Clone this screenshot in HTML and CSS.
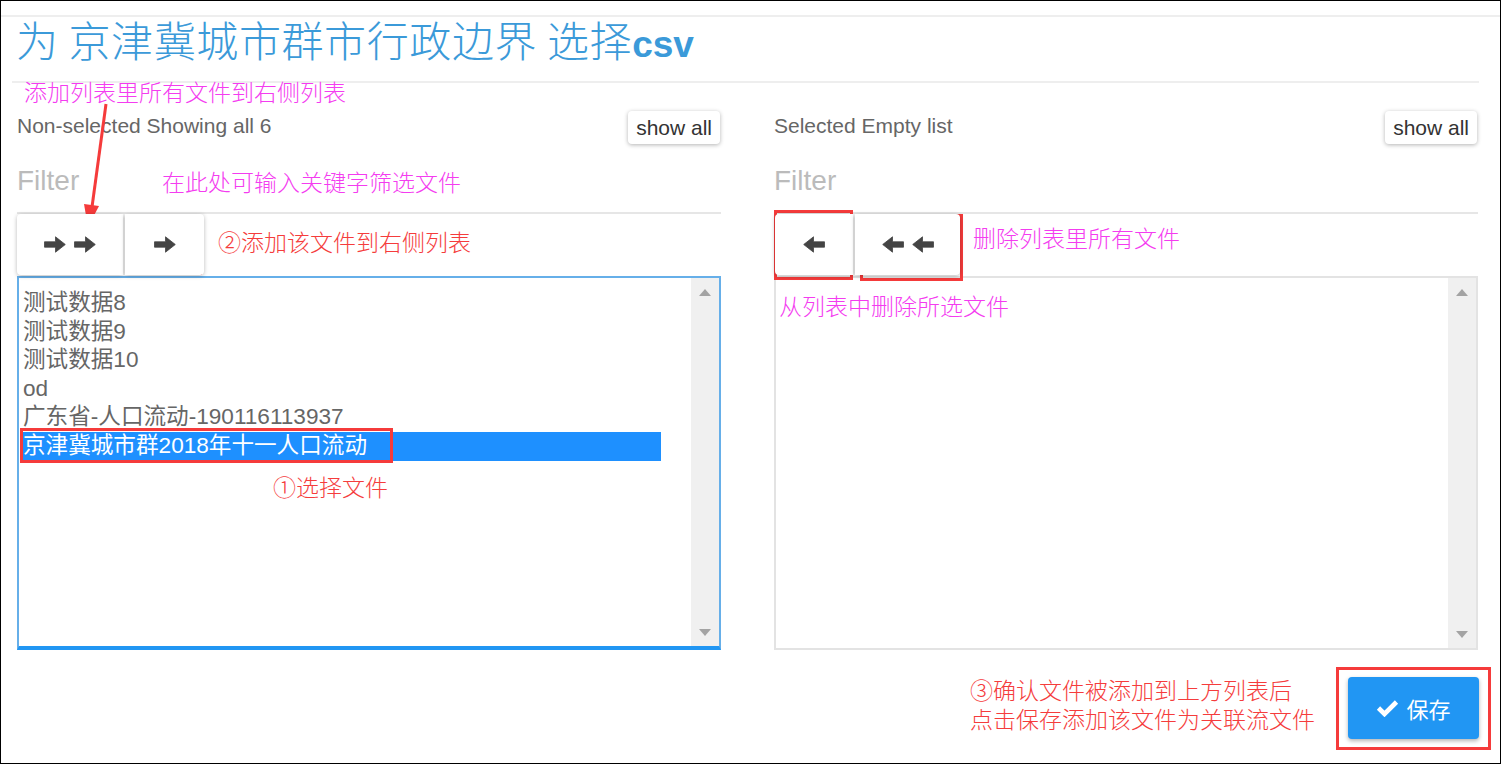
FILE: index.html
```html
<!DOCTYPE html>
<html lang="zh-CN">
<head>
<meta charset="utf-8">
<title>选择csv</title>
<link rel="stylesheet" href="styles.css">
</head>
<body>
<div class="frame">
  <div class="topbar"></div>
  <h1 class="title">为 京津冀城市群市行政边界 选择<b>csv</b></h1>
  <div class="rule"></div>

  <div class="dual">
    <div class="col">
      <div class="col-head">
        <span class="info">Non-selected Showing all 6</span>
        <button class="showall">show all</button>
      </div>
      <div class="filter">Filter</div>
      <div class="btns">
        <button class="mv mv-double">
          <svg class="arr" viewBox="0 0 22 17"><path d="M0.5 5.8H11.5V0.8L21.3 8.5L11.5 16.2V11.2H0.5Z"/></svg>
          <svg class="arr" viewBox="0 0 22 17"><path d="M0.5 5.8H11.5V0.8L21.3 8.5L11.5 16.2V11.2H0.5Z"/></svg>
        </button>
        <button class="mv mv-single">
          <svg class="arr" viewBox="0 0 22 17"><path d="M0.5 5.8H11.5V0.8L21.3 8.5L11.5 16.2V11.2H0.5Z"/></svg>
        </button>
      </div>
      <div class="listbox active">
        <div class="items">
          <div class="item">测试数据8</div>
          <div class="item">测试数据9</div>
          <div class="item">测试数据10</div>
          <div class="item">od</div>
          <div class="item">广东省-人口流动-190116113937</div>
          <div class="item sel">京津冀城市群2018年十一人口流动</div>
        </div>
        <div class="sbar"><span class="tri-up"></span><span class="tri-down"></span></div>
      </div>
    </div>

    <div class="col">
      <div class="col-head">
        <span class="info">Selected Empty list</span>
        <button class="showall">show all</button>
      </div>
      <div class="filter">Filter</div>
      <div class="btns btns-right">
        <button class="mv mv-single-r">
          <svg class="arr" viewBox="0 0 22 17"><path d="M21.5 5.8H10.5V0.8L0.7 8.5L10.5 16.2V11.2H21.5Z"/></svg>
        </button>
        <button class="mv mv-double-r">
          <svg class="arr" viewBox="0 0 22 17"><path d="M21.5 5.8H10.5V0.8L0.7 8.5L10.5 16.2V11.2H21.5Z"/></svg>
          <svg class="arr" viewBox="0 0 22 17"><path d="M21.5 5.8H10.5V0.8L0.7 8.5L10.5 16.2V11.2H21.5Z"/></svg>
        </button>
      </div>
      <div class="listbox">
        <div class="items"></div>
        <div class="sbar"><span class="tri-up"></span><span class="tri-down"></span></div>
      </div>
    </div>
  </div>

  <div class="footer">
    <button class="save">
      <svg class="chk" viewBox="0 0 23 18"><polyline points="2.5,9 8.5,15 20.5,3"/></svg>
      <span>保存</span>
    </button>
  </div>

  <div class="notes">
    <div class="note mag n1">添加列表里所有文件到右侧列表</div>
    <svg class="pointer" viewBox="0 0 200 240">
      <line x1="106" y1="104" x2="92" y2="207"/>
      <polygon points="88,227 99,206 84,204"/>
    </svg>
    <div class="note mag n2">在此处可输入关键字筛选文件</div>
    <div class="box b1"></div>
    <div class="box b2"></div>
    <div class="note red n3">②添加该文件到右侧列表</div>
    <div class="box b3"></div>
    <div class="note red n4">①选择文件</div>
    <div class="box b4"></div>
    <div class="box b5"></div>
    <div class="note mag n5">删除列表里所有文件</div>
    <div class="note mag n6">从列表中删除所选文件</div>
    <div class="note red n7">③确认文件被添加到上方列表后</div>
    <div class="note red n8">点击保存添加该文件为关联流文件</div>
    <div class="box b6"></div>
  </div>
</div>
</body>
</html>
```

FILE: styles.css
```css
body {
  margin: 0;
  background: #fff;
}

.frame {
  position: relative;
  width: 1501px;
  height: 764px;
  box-sizing: border-box;
  border: 1px solid #000;
  overflow: hidden;
  font-family: "Liberation Sans", "Noto Sans CJK SC", sans-serif;
  background: #fff;
}

.topbar {
  height: 14px;
  border-bottom: 2px solid #eee;
}

.title {
  margin: 0;
  padding-left: 15px;
  height: 44px;
  line-height: 44px;
  font-family: "Noto Sans CJK SC", "Liberation Sans", sans-serif;
  font-size: 42px;
  letter-spacing: 0.6px;
  font-weight: 300;
  color: #3b9ad9;
  white-space: nowrap;
}

.title b {
  font-family: "Liberation Sans", sans-serif;
  font-weight: 700;
  font-size: 37px;
  letter-spacing: 0;
}

.rule {
  margin: 20px 21px 0 11px;
  border-top: 2px solid #eee;
}

.dual {
  display: grid;
  grid-template-columns: 704px 704px;
  column-gap: 53px;
  padding: 28px 22px 0 16px;
}

.col-head {
  display: flex;
  justify-content: space-between;
  align-items: center;
  height: 33px;
}

.info {
  padding-bottom: 3px;
  font-size: 21px;
  color: #666;
}

.showall {
  height: 33px;
  margin-right: 1px;
  padding: 0 8px;
  border: 0;
  border-radius: 4px;
  background: #fff;
  box-shadow: 0 1px 4px rgba(0, 0, 0, 0.3);
  font-family: "Liberation Sans", sans-serif;
  font-size: 21px;
  color: #333;
}

.filter {
  box-sizing: border-box;
  height: 70px;
  padding-top: 6px;
  display: flex;
  align-items: center;
  border-bottom: 2px solid #e6e6e6;
  font-size: 28px;
  color: #bbb;
}

.btns {
  display: flex;
  gap: 2px;
  height: 61px;
  margin-bottom: 1px;
}

.btns-right {
  padding-left: 1px;
}

.mv {
  position: relative;
  z-index: 1;
  display: flex;
  align-items: center;
  justify-content: center;
  gap: 8px;
  padding: 0;
  border: 0;
  background: #fff;
  box-shadow: 0 1px 4px rgba(0, 0, 0, 0.28);
}

.mv:first-child {
  border-radius: 4px 0 0 4px;
}

.mv:last-child {
  border-radius: 0 4px 4px 0;
}

.mv-double { width: 106px; }
.mv-single { width: 79px; }
.mv-single-r { width: 78px; }
.mv-double-r { width: 105px; }

.arr {
  width: 22px;
  height: 17px;
  fill: #444;
  stroke: #444;
  stroke-width: 0.8;
  stroke-linejoin: round;
}

.listbox {
  display: flex;
  box-sizing: border-box;
  height: 374px;
  border: 2px solid #e3e3e3;
  background: #fff;
}

.listbox.active {
  border-color: #66afe9;
  border-bottom: 4px solid #2196f3;
}

.items {
  flex: 1;
  padding: 11px 30px 0 1px;
}

.item {
  height: 28.6px;
  line-height: 28.6px;
  padding-left: 3px;
  font-size: 22.6px;
  color: #666;
  white-space: nowrap;
}

.item.sel {
  background: #1e90ff;
  color: #fff;
}

.sbar {
  width: 28px;
  box-sizing: border-box;
  padding: 11px 0 10px;
  display: flex;
  flex-direction: column;
  justify-content: space-between;
  align-items: center;
  background: #f0f0f0;
}

.tri-up {
  width: 0;
  height: 0;
  border-left: 6.5px solid transparent;
  border-right: 6.5px solid transparent;
  border-bottom: 7px solid #a3a3a3;
}

.tri-down {
  width: 0;
  height: 0;
  border-left: 6.5px solid transparent;
  border-right: 6.5px solid transparent;
  border-top: 7px solid #a3a3a3;
}

.footer {
  display: flex;
  justify-content: flex-end;
  padding: 27px 21px 0 0;
}

.save {
  display: flex;
  align-items: center;
  justify-content: center;
  gap: 7px;
  width: 131px;
  height: 62px;
  padding: 0;
  border: 0;
  border-radius: 4px;
  background: #2196f3;
  box-shadow: 0 2px 4px rgba(0, 0, 0, 0.3);
  font-family: "Noto Sans CJK SC", sans-serif;
  font-size: 22px;
  color: #fff;
}

.chk {
  width: 23px;
  height: 18px;
  fill: none;
  stroke: #fff;
  stroke-width: 4.6;
}

/* annotation overlay */
.notes {
  position: absolute;
  left: -1px;
  top: -1px;
  width: 1501px;
  height: 764px;
  pointer-events: none;
}

.note {
  position: absolute;
  font-family: "Liberation Sans", "Noto Sans CJK SC", sans-serif;
  font-size: 23px;
  line-height: 28px;
  font-weight: 300;
  white-space: nowrap;
}

.mag { color: #f43cf0; }
.red { color: #f53c3c; }

.n1 { left: 24px; top: 79px; }
.n2 { left: 162px; top: 169px; }
.n3 { left: 218px; top: 229px; }
.n4 { left: 273px; top: 474px; }
.n5 { left: 973px; top: 225px; }
.n6 { left: 779px; top: 293px; }
.n7 { left: 970px; top: 677px; }
.n8 { left: 970px; top: 706px; }

.box {
  position: absolute;
  box-sizing: border-box;
  border: 3px solid #f53b3b;
}

.b1 { left: 22px; top: 222px; width: 93px; height: 49px; }
.b2 { left: 126px; top: 218px; width: 76px; height: 57px; }
.b3 { left: 20px; top: 428px; width: 373px; height: 35px; }
.b4 { left: 774px; top: 210px; width: 79px; height: 70px; }
.b5 { left: 860px; top: 214px; width: 103px; height: 67px; }
.b6 { left: 1336px; top: 667px; width: 155px; height: 83px; }

.pointer {
  position: absolute;
  left: 0;
  top: 0;
  width: 200px;
  height: 240px;
}

.pointer line {
  stroke: #f53b3b;
  stroke-width: 3;
}

.pointer polygon {
  fill: #f53b3b;
}
```
